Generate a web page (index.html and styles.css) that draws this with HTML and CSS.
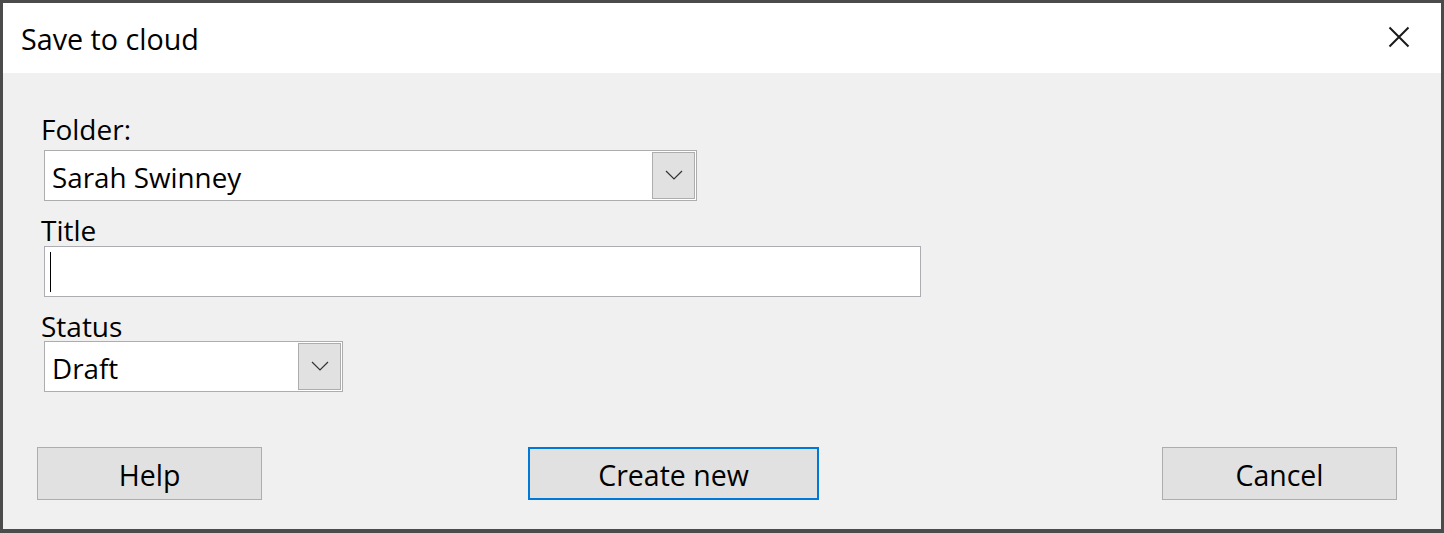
FILE: index.html
```html
<!DOCTYPE html>
<html>
<head>
<meta charset="utf-8">
<link rel="stylesheet" href="styles.css">
</head>
<body>
<div class="window">
  <div class="titlebar">
    <span class="title">Save to cloud</span>
    <svg class="close" width="22" height="22" viewBox="0 0 22 22"><path d="M1.5 1.5 L20.5 20.5 M20.5 1.5 L1.5 20.5" stroke="#1a1a1a" stroke-width="2" fill="none"/></svg>
  </div>
  <div class="content">
    <div class="field f-folder">
      <div class="label">Folder:</div>
      <div class="select wide">
        <span class="value">Sarah Swinney</span>
        <span class="drop"><svg width="18" height="10" viewBox="0 0 18 10"><path d="M1 1 L9 9 L17 1" stroke="#333" stroke-width="1.2" fill="none"/></svg></span>
      </div>
    </div>
    <div class="field f-title">
      <div class="label">Title</div>
      <div class="textbox"><span class="caret"></span></div>
    </div>
    <div class="field f-status">
      <div class="label">Status</div>
      <div class="select narrow">
        <span class="value">Draft</span>
        <span class="drop"><svg width="18" height="10" viewBox="0 0 18 10"><path d="M1 1 L9 9 L17 1" stroke="#333" stroke-width="1.2" fill="none"/></svg></span>
      </div>
    </div>
    <div class="buttons">
      <div class="btn help">Help</div>
      <div class="btn create">Create new</div>
      <div class="btn cancel">Cancel</div>
    </div>
  </div>
</div>
</body>
</html>
```
FILE: styles.css
```css
html, body {
  margin: 0;
  padding: 0;
  background: #4b4b4b;
}
body {
  font-family: "Open Sans", "Noto Sans", sans-serif;
  color: #000;
  width: 1444px;
  height: 533px;
  overflow: hidden;
}
.window {
  box-sizing: border-box;
  width: 1444px;
  height: 533px;
  border: 3px solid #4b4b4b;
  border-bottom-width: 4px;
  display: flex;
  flex-direction: column;
  background: #f0f0f0;
}
.titlebar {
  height: 70px;
  background: #fff;
  display: flex;
  align-items: center;
  padding-left: 18px;
  padding-right: 31px;
}
.title {
  font-size: 28.7px;
  flex: 1;
  line-height: 36px;
  margin-top: 2px;
}
.close {
  display: block;
  margin-top: -3px;
}
.content {
  flex: 1;
  padding: 40px 44px 0 38px;
  display: flex;
  flex-direction: column;
}
.field {
  display: flex;
  flex-direction: column;
  align-items: flex-start;
}
.label {
  font-size: 28px;
  line-height: 32px;
  height: 32px;
}
.f-folder .label { margin-bottom: 5px; }
.f-folder { margin-bottom: 13px; }
.f-title .label { margin-bottom: 0; }
.f-title { margin-bottom: 13px; }
.f-status .label { margin-bottom: -1px; }
.select, .textbox {
  box-sizing: border-box;
  height: 51px;
  margin-left: 3px;
  background: #fff;
  border: 1px solid #adadad;
  display: flex;
  align-items: center;
}
.select .value {
  flex: 1;
  font-size: 27.8px;
  padding-left: 7px;
  line-height: 36px;
  margin-top: 3px;
}
.drop {
  box-sizing: border-box;
  width: 43px;
  height: 47px;
  margin-right: 1px;
  background: #e1e1e1;
  border: 1px solid #adadad;
  display: flex;
  align-items: center;
  justify-content: center;
}
.drop svg { display: block; margin-top: -1px; }
.wide { width: 653px; }
.narrow { width: 299px; }
.textbox {
  width: 877px;
  border-color: #abadb3;
  padding-left: 5px;
}
.caret {
  width: 1px;
  height: 40px;
  background: #000;
}
.buttons {
  display: flex;
  margin-top: 55px;
}
.btn {
  box-sizing: border-box;
  height: 53px;
  background: #e1e1e1;
  border: 1px solid #adadad;
  font-size: 28.5px;
  display: flex;
  align-items: center;
  justify-content: center;
  line-height: 36px;
  padding-top: 2px;
}
.help { width: 225px; margin-left: -4px; }
.create { width: 291px; margin-left: 266px; border: 2px solid #0078d7; }
.cancel { width: 235px; margin-left: auto; }
```
